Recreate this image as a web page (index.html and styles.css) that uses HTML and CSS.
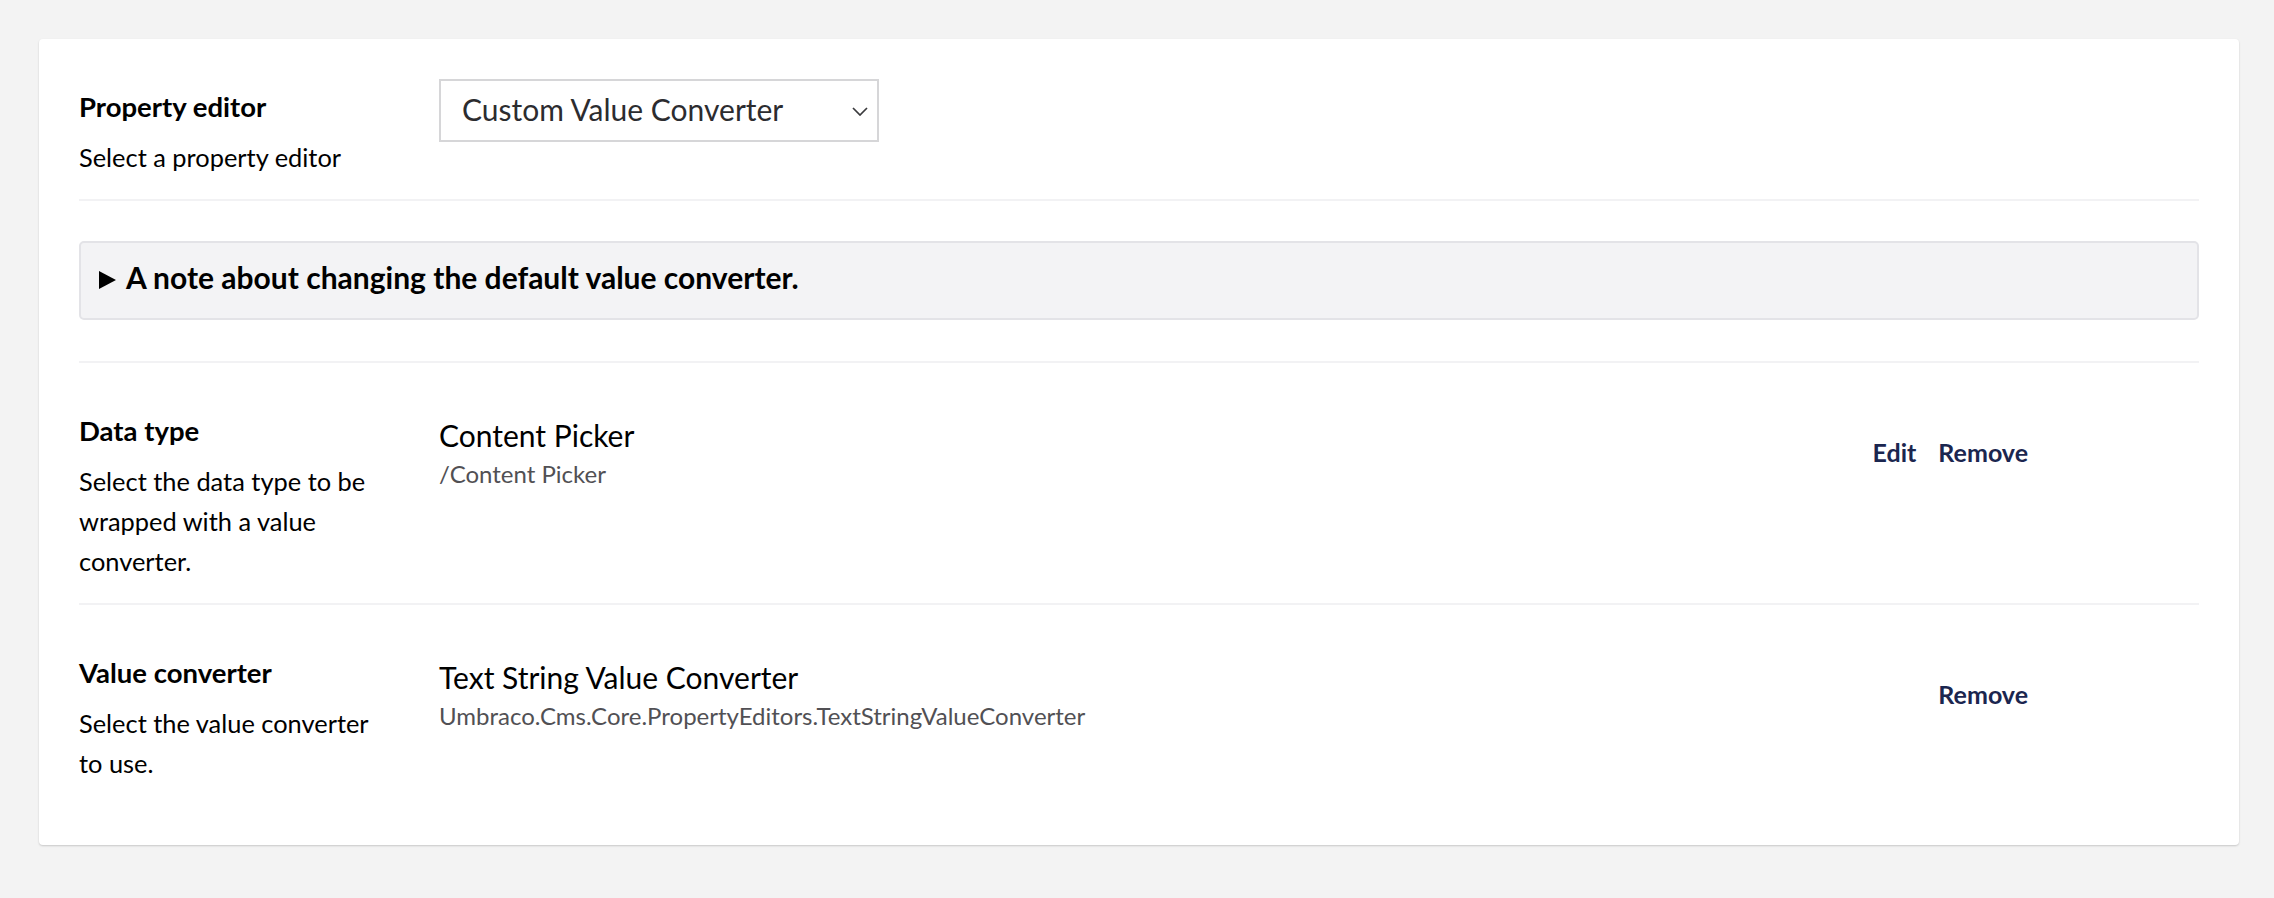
FILE: index.html
```html
<!DOCTYPE html>
<html lang="en">
<head>
<meta charset="utf-8">
<title>Value Converter</title>
<link rel="stylesheet" href="styles.css">
</head>
<body>
<main class="card">
  <section class="row">
    <div class="label-col">
      <div class="label">Property editor</div>
      <div class="desc">Select a property editor</div>
    </div>
    <div class="value-col">
      <div class="select">
        <span class="select-text">Custom Value Converter</span>
        <svg class="chev" width="16" height="9" viewBox="0 0 16 9"><path d="M1 1 L8 8 L15 1" fill="none" stroke="#3a3a3d" stroke-width="1.7"/></svg>
      </div>
    </div>
  </section>
  <section class="row row-note">
    <details class="note">
      <summary class="note-summary">A note about changing the default value converter.</summary>
    </details>
  </section>
  <section class="row">
    <div class="label-col">
      <div class="label">Data type</div>
      <div class="desc">Select the data type to be wrapped with a value converter.</div>
    </div>
    <div class="value-col">
      <div class="ref">
        <div class="ref-info">
          <div class="ref-name">Content Picker</div>
          <div class="ref-detail">/Content Picker</div>
        </div>
        <div class="ref-actions">
          <button class="action">Edit</button>
          <button class="action">Remove</button>
        </div>
      </div>
    </div>
  </section>
  <section class="row row-last">
    <div class="label-col">
      <div class="label">Value converter</div>
      <div class="desc">Select the value converter to use.</div>
    </div>
    <div class="value-col">
      <div class="ref">
        <div class="ref-info">
          <div class="ref-name">Text String Value Converter</div>
          <div class="ref-detail">Umbraco.Cms.Core.PropertyEditors.TextStringValueConverter</div>
        </div>
        <div class="ref-actions">
          <button class="action">Remove</button>
        </div>
      </div>
    </div>
  </section>
</main>
</body>
</html>
```
FILE: styles.css
```css
html, body {
  margin: 0;
  padding: 0;
}
body {
  background: #f3f3f3;
  font-family: Lato, "Open Sans", sans-serif;
  color: #000;
  padding: 39px 35px 40px 39px;
}
.card {
  background: #fff;
  border-radius: 4px;
  box-shadow: 0 1px 2px rgba(0,0,0,0.18);
  padding: 0 40px 40px;
}
.row {
  display: grid;
  grid-template-columns: 360px 1fr;
  padding: 40px 0 22px;
  border-bottom: 2px solid #f2f2f4;
}
.row-last {
  border-bottom: none;
}
.row-note {
  display: block;
  padding: 40px 0 41px;
}
.label {
  font-weight: 700;
  font-size: 27.5px;
  line-height: 40px;
  padding-top: 8px;
}
.desc {
  font-size: 25.4px;
  line-height: 40px;
  margin-top: 10px;
  padding-right: 60px;
}
.select {
  width: 440px;
  height: 63px;
  box-sizing: border-box;
  border: 2px solid #d6d6d8;
  display: flex;
  align-items: center;
  justify-content: space-between;
  padding: 0 9px 4px 21px;
  background: #fff;
}
.select-text {
  font-size: 30px;
  color: #2c2c2f;
}
.chev {
  margin-top: 6px;
}
.note {
  border: 2px solid #e3e3e7;
  border-radius: 5px;
  background: #f3f3f5;
}
.note-summary {
  list-style: none;
  display: flex;
  align-items: center;
  gap: 10px;
  padding: 14px 18px 20px;
  font-weight: 700;
  font-size: 30px;
  line-height: 41px;
  cursor: pointer;
}
.note-summary::-webkit-details-marker {
  display: none;
}
.note-summary::before {
  content: "";
  width: 0;
  height: 0;
  margin-top: 4px;
  border-left: 17px solid #000;
  border-top: 9.5px solid transparent;
  border-bottom: 9.5px solid transparent;
}
.ref {
  display: flex;
  align-items: center;
  padding-top: 12px;
}
.ref-info {
  flex: 1;
}
.ref-name {
  font-size: 30px;
  line-height: 40px;
}
.ref-detail {
  font-size: 24px;
  line-height: 34px;
  color: #515054;
  margin-top: 2px;
}
.ref-actions {
  display: flex;
  margin-right: 160px;
  margin-bottom: 2px;
}
.action {
  background: none;
  border: none;
  padding: 0 11px;
  font-family: inherit;
  font-weight: 700;
  font-size: 25px;
  color: #1b264f;
  cursor: pointer;
}
```
